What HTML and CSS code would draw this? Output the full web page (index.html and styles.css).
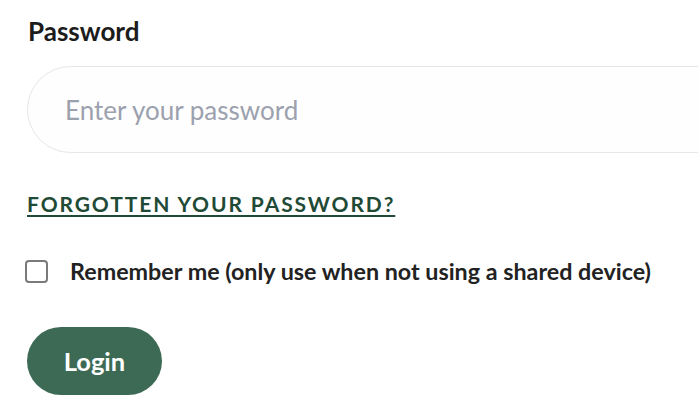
FILE: index.html
```html
<!DOCTYPE html>
<html lang="en">
<head>
<meta charset="UTF-8" />
<meta name="viewport" content="width=device-width, initial-scale=1" />
<title>Login</title>
<link rel="stylesheet" href="styles.css">
</head>
<body>

<form class="login-form" onsubmit="return false">
  <label class="field-label" for="password">Password</label>
  <input class="text-input" id="password" type="password" placeholder="Enter your password" />

  <a class="forgot-link" href="#">Forgotten your password?</a>

  <label class="remember">
    <input type="checkbox" class="remember-box" />
    <span>Remember me (only use when not using a shared device)</span>
  </label>

  <button class="btn-login" type="submit">Login</button>
</form>

</body>
</html>
```

FILE: styles.css
```css
html, body {
  margin: 0;
  background: #fff;
  overflow: hidden;
}

/* Form container */
.login-form {
  display: flex;
  flex-direction: column;
  align-items: flex-start;
  padding: 16px 0 0 27px;
  font-family: Lato, "Liberation Sans", sans-serif;
  color: #1c1c1c;
}

.field-label {
  font-size: 26px;
  font-weight: 700;
  line-height: 30px;
  margin-left: 1px;
}

.text-input {
  box-sizing: border-box;
  width: 720px;
  height: 87px;
  margin-top: 20px;
  padding: 0 0 0 37px;
  border: 1px solid #e6e6e9;
  border-radius: 44px;
  background: #fefefe;
  font-family: inherit;
  font-size: 26px;
  outline: none;
}

.text-input::placeholder {
  color: #9ca1ae;
}

/* Forgotten password link */
.forgot-link {
  margin-top: 38px;
  font-size: 21px;
  font-weight: 700;
  letter-spacing: 1.9px;
  text-transform: uppercase;
  color: #1f4a36;
  text-decoration: underline;
  text-underline-offset: 3px;
  line-height: 26px;
}

/* Remember me */
.remember {
  display: flex;
  align-items: center;
  gap: 22px;
  margin-top: 40px;
  margin-left: -2px;
  font-size: 23.3px;
  font-weight: 700;
  line-height: 28px;
  color: #222;
}

.remember-box {
  appearance: none;
  width: 23px;
  height: 23px;
  margin: 0;
  border: 2px solid #7a7a7a;
  border-radius: 4px;
  background: #fff;
}

/* Button */
.btn-login {
  margin-top: 42px;
  width: 135px;
  height: 68px;
  border: none;
  border-radius: 34px;
  background: #3d6a55;
  color: #fff;
  font-family: inherit;
  font-size: 25.5px;
  font-weight: 700;
  cursor: pointer;
}
```
